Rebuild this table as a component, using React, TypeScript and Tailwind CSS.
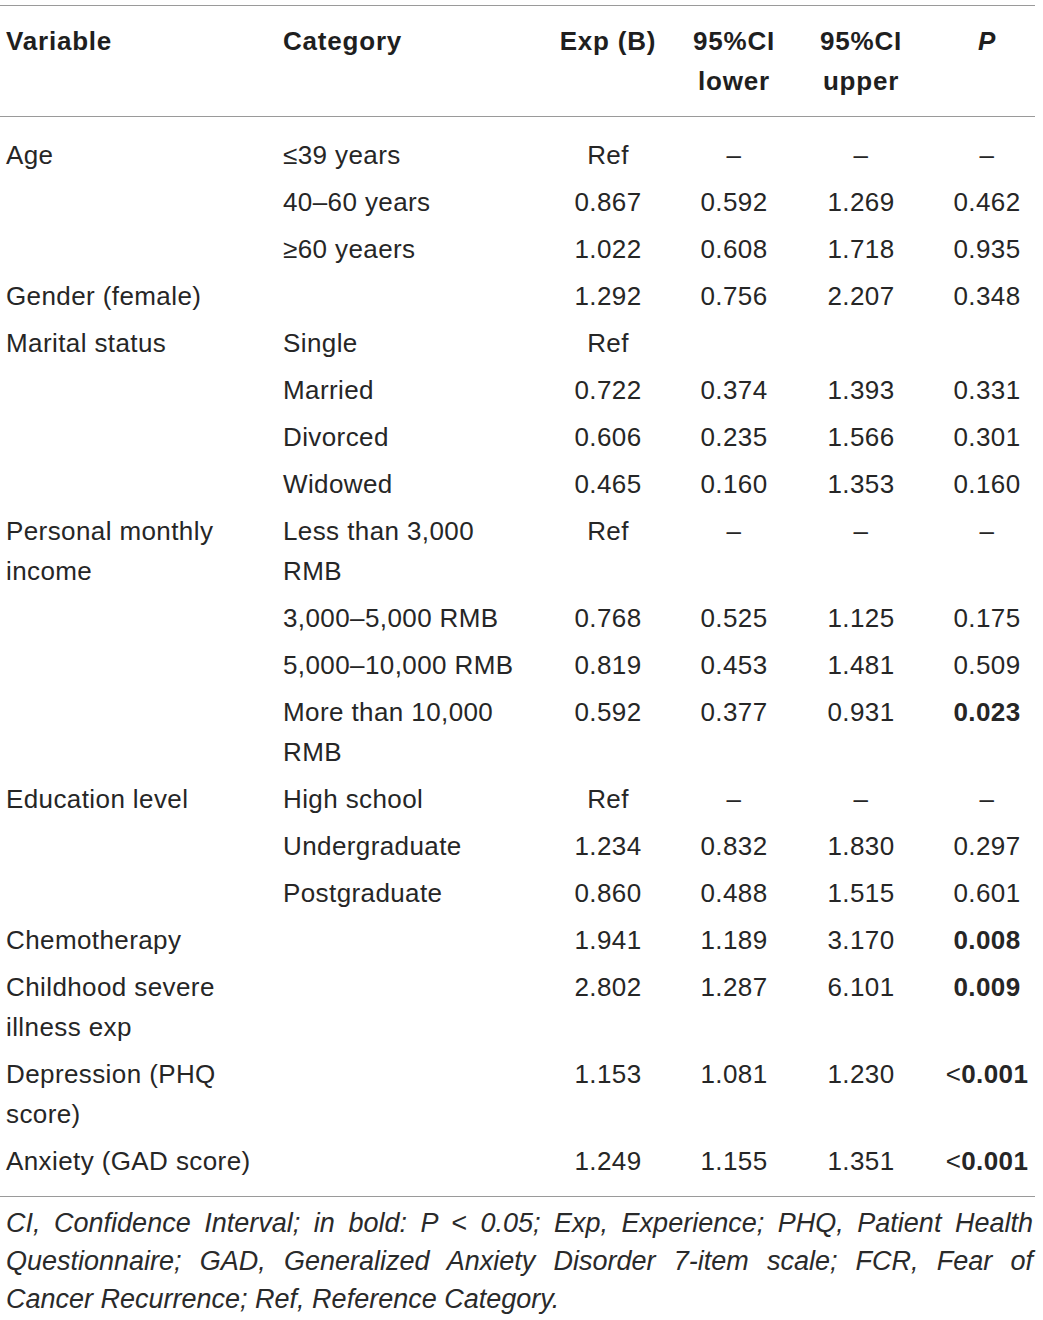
const rows: [string[], string[], string, string, string, string, boolean?][] = [
  [["Age"], ["≤39 years"], "Ref", "–", "–", "–"],
  [[], ["40–60 years"], "0.867", "0.592", "1.269", "0.462"],
  [[], ["≥60 yeaers"], "1.022", "0.608", "1.718", "0.935"],
  [["Gender (female)"], [], "1.292", "0.756", "2.207", "0.348"],
  [["Marital status"], ["Single"], "Ref", "", "", ""],
  [[], ["Married"], "0.722", "0.374", "1.393", "0.331"],
  [[], ["Divorced"], "0.606", "0.235", "1.566", "0.301"],
  [[], ["Widowed"], "0.465", "0.160", "1.353", "0.160"],
  [["Personal monthly", "income"], ["Less than 3,000", "RMB"], "Ref", "–", "–", "–"],
  [[], ["3,000–5,000 RMB"], "0.768", "0.525", "1.125", "0.175"],
  [[], ["5,000–10,000 RMB"], "0.819", "0.453", "1.481", "0.509"],
  [[], ["More than 10,000", "RMB"], "0.592", "0.377", "0.931", "0.023", true],
  [["Education level"], ["High school"], "Ref", "–", "–", "–"],
  [[], ["Undergraduate"], "1.234", "0.832", "1.830", "0.297"],
  [[], ["Postgraduate"], "0.860", "0.488", "1.515", "0.601"],
  [["Chemotherapy"], [], "1.941", "1.189", "3.170", "0.008", true],
  [["Childhood severe", "illness exp"], [], "2.802", "1.287", "6.101", "0.009", true],
  [["Depression (PHQ", "score)"], [], "1.153", "1.081", "1.230", "<0.001", true],
  [["Anxiety (GAD score)"], [], "1.249", "1.155", "1.351", "<0.001", true],
]

const cols = "grid grid-cols-[277px_268px_126px_126px_128px_110px]"

function Lines({ lines }: { lines: string[] }) {
  return (
    <>
      {lines.map((l) => (
        <div key={l} className="whitespace-nowrap">
          {l}
        </div>
      ))}
    </>
  )
}

function PValue({ value, bold }: { value: string; bold?: boolean }) {
  if (!bold) return <>{value}</>
  if (value.startsWith("<")) {
    return (
      <>
        {"<"}
        <span className="font-bold">{value.slice(1)}</span>
      </>
    )
  }
  return <span className="font-bold">{value}</span>
}

export default function App() {
  return (
    <div className="w-[1043px] h-[1320px] bg-white pt-[5px] font-['Liberation_Sans',Arial,sans-serif] text-[26px] leading-[40px] tracking-[0.4px] text-[#262626]">
      <div className="w-[1035px] border-t border-[#9a9a9a]">
        {/* Header */}
        <div className={`${cols} pt-[15px] pb-[15px] font-bold tracking-[0.8px] text-[#1f1f1f] border-b border-[#9a9a9a]`}>
          <div className="pl-[6px]">Variable</div>
          <div className="pl-[6px]">Category</div>
          <div className="text-center">Exp (B)</div>
          <div className="text-center">
            <div>95%CI</div>
            <div>lower</div>
          </div>
          <div className="text-center">
            <div>95%CI</div>
            <div>upper</div>
          </div>
          <div className="pl-[14px] text-center italic">P</div>
        </div>

        {/* Body */}
        <div className="pt-[14px] pb-[12px] border-b border-[#9a9a9a]">
          {rows.map(([variable, category, exp, lower, upper, p, bold], i) => (
            <div key={i} className={`${cols} py-[3.5px]`}>
              <div className="pl-[6px]">
                <Lines lines={variable} />
              </div>
              <div className="pl-[6px]">
                <Lines lines={category} />
              </div>
              <div className="text-center">{exp}</div>
              <div className="text-center">{lower}</div>
              <div className="text-center">{upper}</div>
              <div className="pl-[14px] text-center whitespace-nowrap">
                <PValue value={p} bold={bold} />
              </div>
            </div>
          ))}
        </div>

        {/* Footnote */}
        <div className="pt-[7px] pl-[6px] pr-[2px] italic text-[27px] leading-[38px] tracking-normal text-[#2a2a2a]">
          <div className="text-justify [text-align-last:justify] whitespace-nowrap">
            CI, Confidence Interval; in bold: P &lt; 0.05; Exp, Experience; PHQ, Patient Health
          </div>
          <div className="text-justify [text-align-last:justify]">
            Questionnaire; GAD, Generalized Anxiety Disorder 7-item scale; FCR, Fear of
          </div>
          <div>Cancer Recurrence; Ref, Reference Category.</div>
        </div>
      </div>
    </div>
  )
}
